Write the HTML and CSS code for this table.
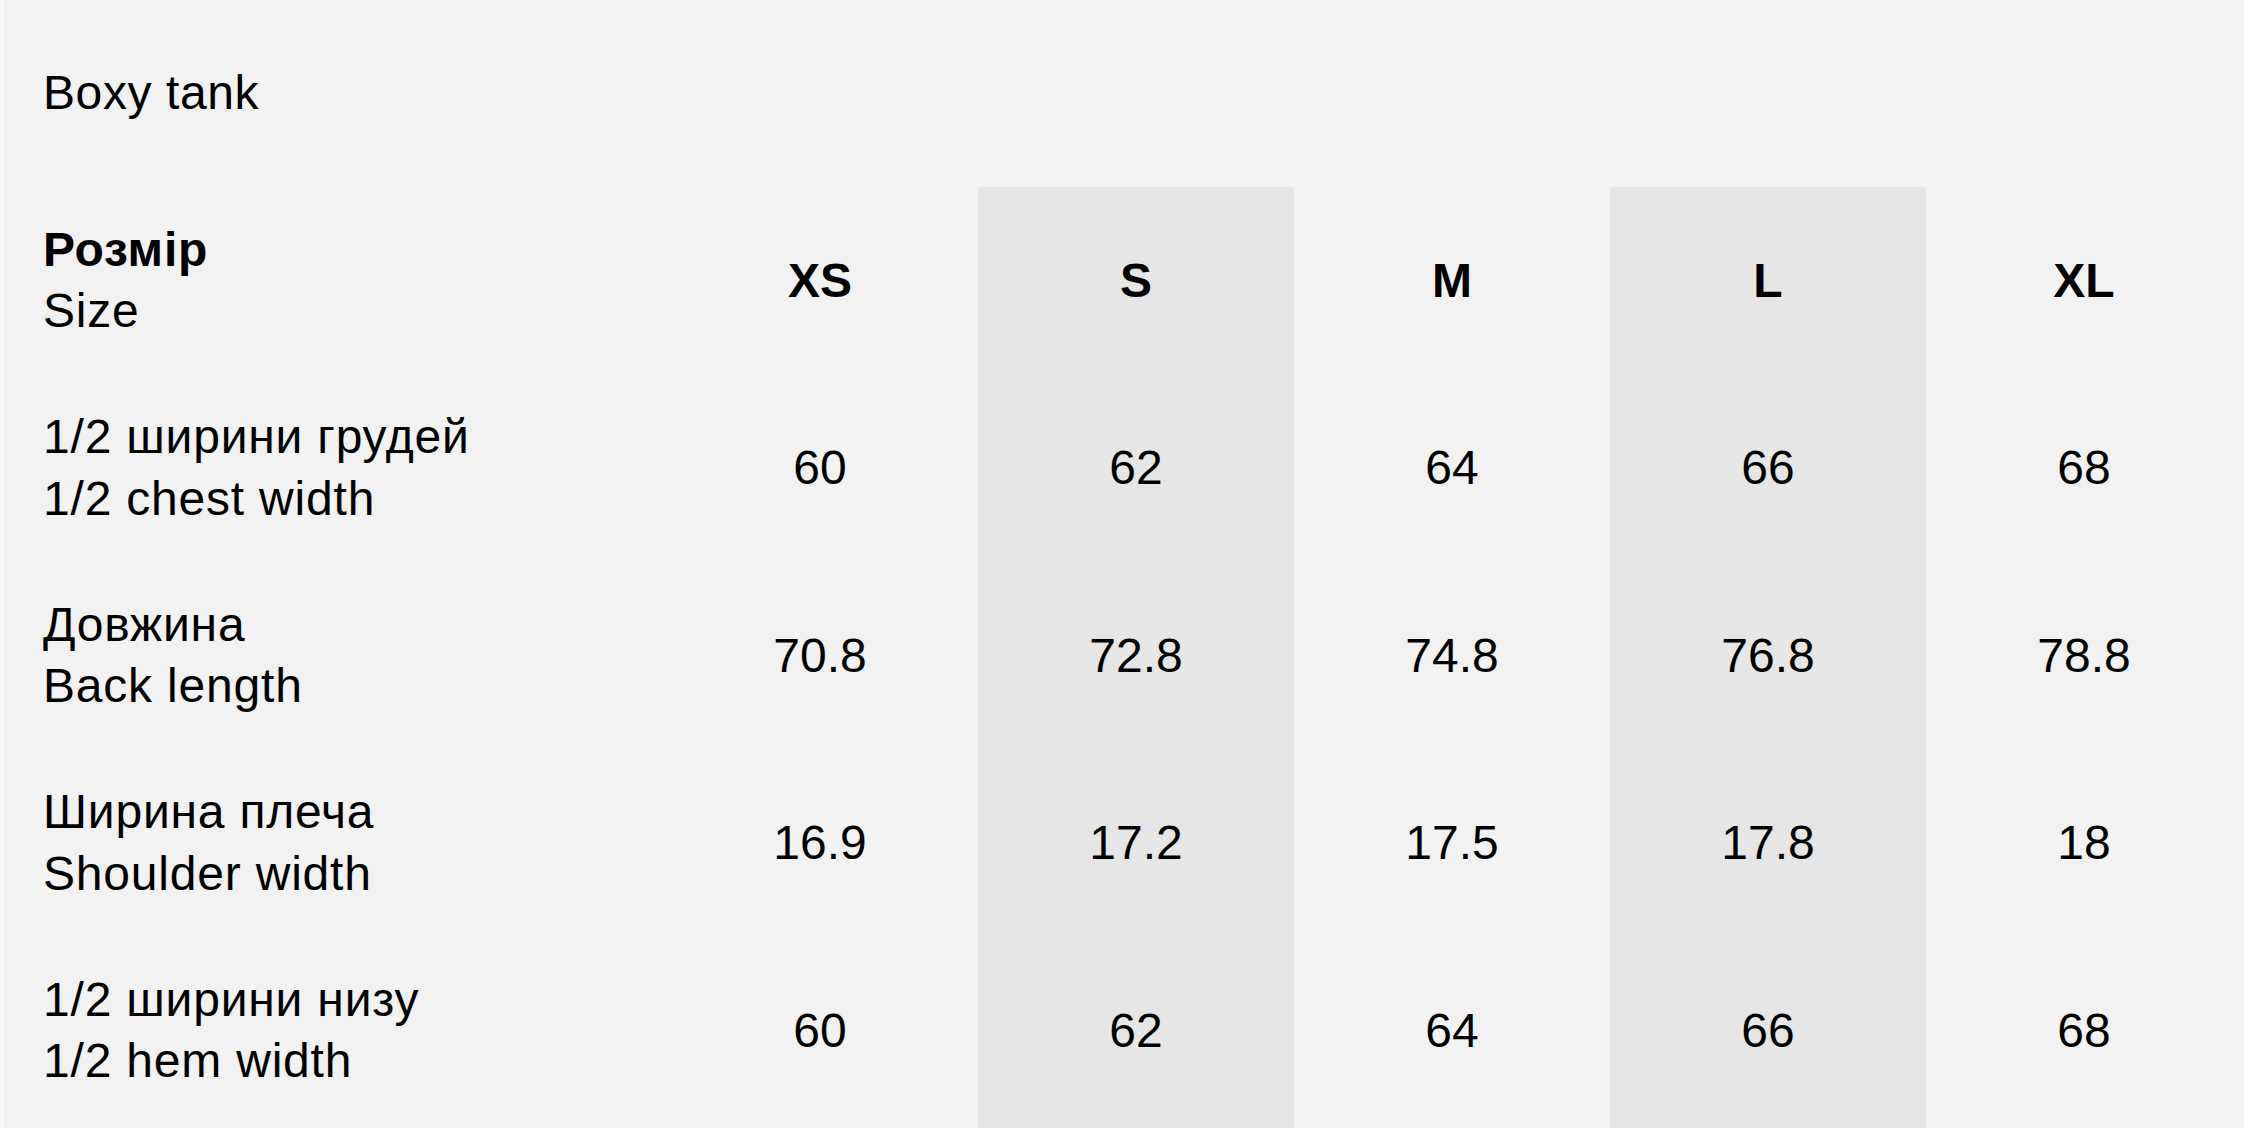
FILE: index.html
```html
<!DOCTYPE html>
<html lang="uk">
<head>
<meta charset="utf-8">
<title>Boxy tank — size chart</title>
<link rel="stylesheet" href="styles.css">
</head>
<body>
<main class="page">
  <h1 class="title">Boxy tank</h1>
  <table class="chart">
    <colgroup>
      <col class="col-label">
      <col class="col-size"><col class="col-size"><col class="col-size"><col class="col-size"><col class="col-size">
    </colgroup>
    <thead>
      <tr>
        <th class="label"><strong>Розмір</strong><br><span class="en">Size</span></th>
        <th class="size">XS</th>
        <th class="size shade">S</th>
        <th class="size">M</th>
        <th class="size shade">L</th>
        <th class="size">XL</th>
      </tr>
    </thead>
    <tbody>
      <tr>
        <td class="label">1/2 ширини грудей<br>1/2 chest width</td>
        <td>60</td><td class="shade">62</td><td>64</td><td class="shade">66</td><td>68</td>
      </tr>
      <tr>
        <td class="label">Довжина<br>Back length</td>
        <td>70.8</td><td class="shade">72.8</td><td>74.8</td><td class="shade">76.8</td><td>78.8</td>
      </tr>
      <tr>
        <td class="label">Ширина плеча<br>Shoulder width</td>
        <td>16.9</td><td class="shade">17.2</td><td>17.5</td><td class="shade">17.8</td><td>18</td>
      </tr>
      <tr class="last">
        <td class="label">1/2 ширини низу<br>1/2 hem width</td>
        <td>60</td><td class="shade">62</td><td>64</td><td class="shade">66</td><td>68</td>
      </tr>
    </tbody>
  </table>
</main>
</body>
</html>
```

FILE: styles.css
```css
html, body {
  margin: 0;
  padding: 0;
  background: #f2f2f2;
}

body {
  font-family: "Liberation Sans", Arial, Helvetica, sans-serif;
  color: #000;
}

.page {
  border-left: 4px solid #f9f9f9;
  padding-top: 62px;
  min-height: 1128px;
  box-sizing: border-box;
}

.title {
  margin: 0 0 63px 0;
  padding-left: 39px;
  font-size: 48px;
  font-weight: normal;
  line-height: 61.5px;
  letter-spacing: 0.6px;
}

.chart {
  border-collapse: collapse;
  table-layout: fixed;
  width: 2238px;
  font-size: 48px;
  line-height: 61.5px;
}

.col-label { width: 658px; }
.col-size { width: 316px; }

.chart th,
.chart td {
  padding: 32.25px 0;
  text-align: center;
  vertical-align: middle;
  font-weight: normal;
}

.chart th.size {
  font-weight: bold;
}

.chart .label {
  text-align: left;
  padding-left: 39px;
  letter-spacing: 0.8px;
}

.chart .label strong {
  font-weight: bold;
}

.chart .shade {
  background: #e6e6e6;
}

.chart tr.last td {
  padding-bottom: 40px;
}
```
